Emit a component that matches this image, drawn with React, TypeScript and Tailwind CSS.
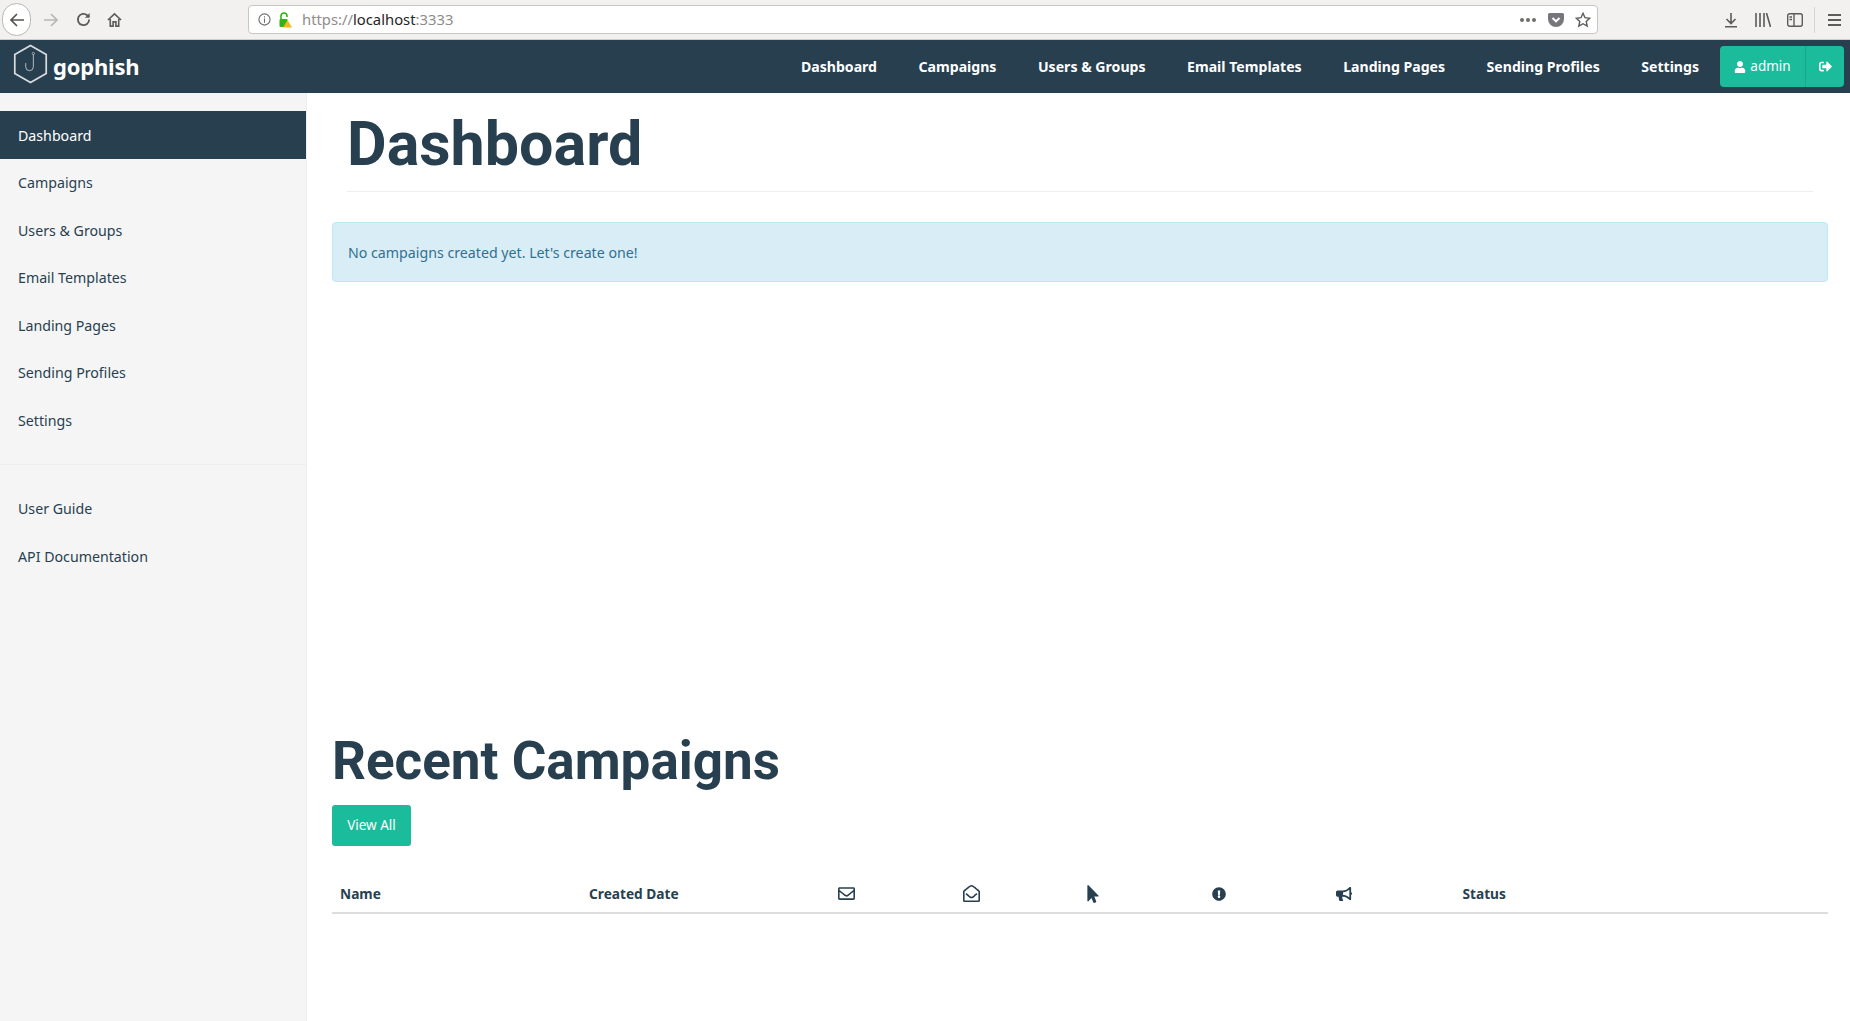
import { FaUser, FaRegEnvelope, FaRegEnvelopeOpen, FaMousePointer, FaExclamationCircle, FaBullhorn, FaSignOutAlt } from 'react-icons/fa';

const topLinks = ['Dashboard', 'Campaigns', 'Users & Groups', 'Email Templates', 'Landing Pages', 'Sending Profiles', 'Settings'];
const sideLinks = ['Dashboard', 'Campaigns', 'Users & Groups', 'Email Templates', 'Landing Pages', 'Sending Profiles', 'Settings'];

function BrowserBar() {
  return (
    <div className="h-[40px] bg-[#f2f1ef] border-b border-[#cfcdc9] flex items-center text-[#5c5b59]">
      <div className="ml-[2px] w-[29px] h-[33px] rounded-full border border-[#b9b7b4] bg-white flex items-center justify-center">
        <svg width="16" height="16" viewBox="0 0 16 16" fill="none" stroke="#55534f" strokeWidth="1.7"><path d="M15 8H2M8 2 2 8l6 6" /></svg>
      </div>
      <svg className="ml-[12px]" width="16" height="16" viewBox="0 0 16 16" fill="none" stroke="#b8b6b2" strokeWidth="1.7"><path d="M1 8h13M8 2l6 6-6 6" /></svg>
      <svg className="ml-[17px]" width="15" height="15" viewBox="0 0 16 16" fill="none" stroke="#5c5b59" strokeWidth="2"><path d="M14 8a6 6 0 1 1-2-4.500L14 5" /><path d="M14.500 1v5h-5" fill="#5c5b59" stroke="none" /></svg>
      <svg className="ml-[16px]" width="15" height="16" viewBox="0 0 16 16" fill="none" stroke="#5c5b59" strokeWidth="1.7"><path d="M1 8l7-6.500L15 8M3.500 7v7.500h3V10h3v4.500h3V7" /></svg>
      <div className="ml-[126px] w-[1350px] h-[29px] bg-white border border-[#c8c6c2] rounded-[4px] flex items-center font-['Noto_Sans',sans-serif] text-[14.8px]">
        <svg className="ml-[9px]" width="13" height="13" viewBox="0 0 14 14" fill="none" stroke="#6b6a68" strokeWidth="1.2"><circle cx="7" cy="7" r="6" /><path d="M7 6v4.500M7 3.500v1.300" /></svg>
        <svg className="ml-[8px]" width="13" height="16" viewBox="0 0 13 16"><path d="M2 7V4a3 3 0 0 1 6 0v1" fill="none" stroke="#2fb511" strokeWidth="1.600" /><rect x="0.500" y="7" width="8" height="8" rx="1" fill="#2fb511" /><path d="M8.500 8 13 15.500H4Z" fill="#f2b91e" /></svg>
        <span className="ml-[10px] text-[#8e8d8b]">https://<span className="text-[#26251f]">localhost</span>:3333</span>
        <div className="ml-auto flex items-center gap-[11px] pr-[6px]">
          <div className="flex gap-[2px] mr-[1px]">
            <span className="w-[4px] h-[4px] rounded-full bg-[#6f6e6c]" />
            <span className="w-[4px] h-[4px] rounded-full bg-[#6f6e6c]" />
            <span className="w-[4px] h-[4px] rounded-full bg-[#6f6e6c]" />
          </div>
          <svg width="16" height="14" viewBox="0 0 16 14"><path d="M1.500 0h13A1.500 1.500 0 0 1 16 1.500V6A8 8 0 0 1 0 6V1.500A1.500 1.500 0 0 1 1.500 0Z" fill="#77767a" /><path d="M4.500 5 8 8.300 11.500 5" fill="none" stroke="#fff" strokeWidth="2" /></svg>
          <svg width="16" height="16" viewBox="0 0 16 16" fill="none" stroke="#5c5b59" strokeWidth="1.400"><path d="M8 1.300l2 4.400 4.700.5-3.500 3.200 1 4.700L8 11.700l-4.200 2.400 1-4.700L1.300 6.200 6 5.700Z" /></svg>
        </div>
      </div>
      <div className="ml-[126px] flex items-center">
        <svg width="14" height="16" viewBox="0 0 14 16" fill="none" stroke="#5c5b59" strokeWidth="1.600"><path d="M7 1v10M2.500 7 7 11.500 11.500 7M1 14.700h12" /></svg>
        <svg className="ml-[17px]" width="16" height="14" viewBox="0 0 16 14" fill="none" stroke="#5c5b59" strokeWidth="1.600"><path d="M1 0v14M5 0v14M9 0v14M11.500 0l4 14" /></svg>
        <svg className="ml-[16px]" width="16" height="14" viewBox="0 0 16 14" fill="none" stroke="#5c5b59" strokeWidth="1.400"><rect x="0.700" y="0.700" width="14.600" height="12.600" rx="2" /><path d="M7 1v12" /><path d="M2.500 4h2.500M2.500 6.500h2.500" /></svg>
        <div className="ml-[11px] w-px h-[26px] bg-[#d8d6d2]" />
        <svg className="ml-[13px]" width="13" height="12" viewBox="0 0 13 12" fill="none" stroke="#5c5b59" strokeWidth="1.800"><path d="M0 1h13M0 6h13M0 11h13" /></svg>
      </div>
    </div>
  );
}

function NavBar() {
  return (
    <div className="h-[53px] bg-[#283f50] flex items-center text-white">
      <svg className="ml-[13px] mb-[5px]" width="35" height="40" viewBox="0 0 36 42" fill="none">
        <path d="M18 1.500 34.500 11v20L18 40.500 1.500 31V11Z" stroke="#d8dcdf" strokeWidth="1.800" />
        <path d="M21 11v13a4 4 0 0 1-8 0v-4" stroke="#b9c2c8" strokeWidth="1" />
        <circle cx="21" cy="10" r="1.200" stroke="#b9c2c8" strokeWidth="0.800" />
      </svg>
      <span className="ml-[5px] font-['Noto_Sans',sans-serif] font-bold text-[22px] tracking-[-0.2px]">gophish</span>
      <div className="ml-auto flex items-center gap-[41.5px] font-['Noto_Sans',sans-serif] font-bold text-[14.1px]">
        {topLinks.map(l => (
          <a key={l} href="#" className="whitespace-nowrap">{l}</a>
        ))}
      </div>
      <div className="ml-[21px] mr-[6px] h-[41px] w-[124px] rounded-[4px] bg-[#1abc9c] flex items-center">
        <div className="w-[86px] h-full flex items-center justify-center gap-[4px] border-r border-[#18a88c] font-['Noto_Sans',sans-serif] text-[13.5px]">
          <FaUser size={12} />
          <span>admin</span>
        </div>
        <div className="flex-1 flex items-center justify-center">
          <FaSignOutAlt size={13} />
        </div>
      </div>
    </div>
  );
}

function Sidebar() {
  return (
    <div className="w-[307px] shrink-0 bg-[#f5f5f5] border-r border-[#eeeeee] pt-[18px] font-['Noto_Sans',sans-serif] text-[14.2px] text-[#283f50]">
      {sideLinks.map((l, i) => (
        <a key={l} href="#" className={'flex items-center h-[47.500px] pl-[18px] pt-px ' + (i === 0 ? 'bg-[#283f50] text-white' : '')}>{l}</a>
      ))}
      <div className="mt-[20px] border-t border-[#eeeeee] pt-[20px]">
        <a href="#" className="flex items-center h-[47.500px] pl-[18px] pt-px">User Guide</a>
        <a href="#" className="flex items-center h-[47.500px] pl-[18px] pt-px">API Documentation</a>
      </div>
    </div>
  );
}

function Main() {
  const th = "w-[124.500px] shrink-0 flex items-center pl-[8px] h-full";
  return (
    <div className="flex-1 pl-[25px] pr-[22px] text-[#283f50]">
      <div className="ml-[15px] mr-[15px] pt-[17px] h-[99px] border-b border-[#eeeeee]">
        <h1 className="font-['Roboto',sans-serif] font-bold text-[61px] leading-[69px]">Dashboard</h1>
      </div>
      <div className="mt-[30px] h-[60px] pt-px bg-[#d9edf7] border border-[#bce8f1] rounded-[4px] flex items-center pl-[15px] text-[#31708f] font-['Noto_Sans',sans-serif] text-[14.2px]">
        No campaigns created yet. Let's create one!
      </div>
      <h1 className="mt-[448px] font-['Roboto',sans-serif] font-bold text-[53px] leading-[62px]">Recent Campaigns</h1>
      <button className="mt-[13px] block w-[79px] h-[41px] rounded-[3px] bg-[#1abc9c] text-white font-['Noto_Sans',sans-serif] text-[13.5px]">View All</button>
      <div className="mt-[33px] h-[35px] pb-[2px] flex border-b-2 border-[#dddddd] font-['Noto_Sans',sans-serif] font-bold text-[13.7px]">
        <div className="w-[249px] shrink-0 flex items-center pl-[8px]">Name</div>
        <div className="w-[249px] shrink-0 flex items-center pl-[8px]">Created Date</div>
        <div className={th}><FaRegEnvelope size={17} className="-mt-[2px]" /></div>
        <div className={th}><FaRegEnvelopeOpen size={17} className="-mt-[2px]" /></div>
        <div className={th}><FaMousePointer size={18} className="-mt-[1px] -ml-[3px]" /></div>
        <div className={th}><FaExclamationCircle size={14} className="-mt-[2px]" /></div>
        <div className={th}><FaBullhorn size={16} className="-mt-[2px]" /></div>
        <div className={th + " pl-[10px]"}>Status</div>
      </div>
    </div>
  );
}

export default function App() {
  return (
    <div className="h-[1021px] flex flex-col overflow-hidden bg-white">
      <BrowserBar />
      <NavBar />
      <div className="flex-1 flex">
        <Sidebar />
        <Main />
      </div>
    </div>
  );
}
